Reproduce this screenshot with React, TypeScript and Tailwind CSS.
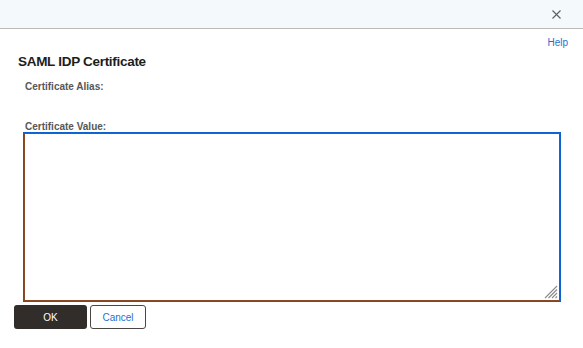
import React from 'react';

const App: React.FC = () => {
  return (
    <div className="w-[583px] h-[348px] bg-white font-['Liberation_Sans',Arial,sans-serif] overflow-hidden">
      {/* Header */}
      <div className="h-[29px] bg-[#f4f9fc] border-b border-[#bdbbb8] flex items-center justify-end pr-[22px]">
        <button className="p-0 leading-none">
          <svg width="9" height="9" viewBox="0 0 9 9">
            <path d="M0.5 0.5L8.5 8.5M8.5 0.5L0.5 8.5" stroke="#5f5f5f" strokeWidth="1.1" />
          </svg>
        </button>
      </div>

      <div className="flex justify-end pr-[15px] pt-[7px]">
        <a className="text-[10px] text-[#1f6fd0] leading-[13px]">Help</a>
      </div>

      <h1 className="ml-[18px] mt-[4px] text-[13.5px] tracking-[-0.3px] font-bold text-[#1d1d1d] leading-[17px]">SAML IDP Certificate</h1>

      <div className="ml-[25px] mt-[11px] text-[10px] font-bold text-[#575757] leading-[12px]">Certificate Alias:</div>

      <div className="ml-[25px] mt-[28px] text-[10px] font-bold text-[#575757] leading-[12px]">Certificate Value:</div>

      <div className="relative ml-[24px] w-[536px] h-[168px]">
        <textarea className="block w-full h-full border border-[#8b4a25] outline outline-1 outline-[#0b63d1] resize-none" />
        <svg className="absolute right-[2px] bottom-[2px]" width="14" height="14" viewBox="0 0 14 14">
          <path d="M13 1L1 13M13 4.5L4.5 13M13 8L8 13M13 11.5L11.5 13" stroke="#8a8a8a" strokeWidth="1.1" />
        </svg>
      </div>

      <div className="flex gap-[3px] ml-[14px] mt-[4px]">
        <button className="w-[73px] h-[24px] rounded-[3px] bg-[#302d2a] text-white text-[10px]">OK</button>
        <button className="w-[56px] h-[24px] rounded-[3px] bg-white border border-[#4a4745] text-[#1f6fd0] text-[10px]">Cancel</button>
      </div>
    </div>
  );
};

export default App;
